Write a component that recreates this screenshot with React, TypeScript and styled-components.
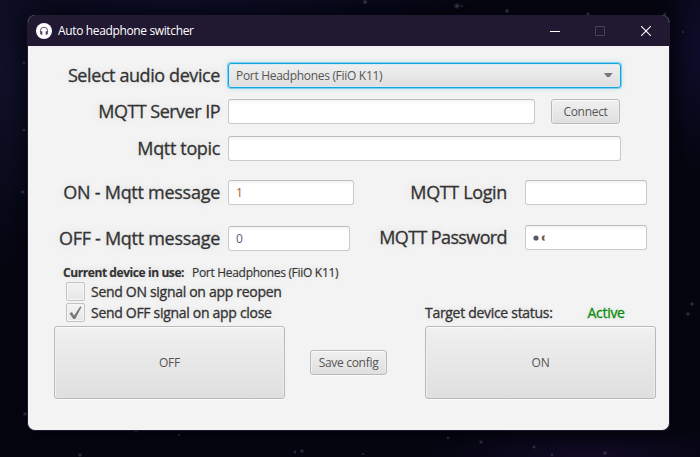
import React from "react";
import styled, { createGlobalStyle } from "styled-components";

const GlobalStyle = createGlobalStyle`
  * { box-sizing: border-box; }
  body { margin: 0; overflow: hidden; }
`;

const Desktop = styled.main`
  position: relative;
  width: 700px;
  height: 457px;
  padding: 15px 30px 0 27px;
  overflow: hidden;
  font-family: "Open Sans", "Noto Sans", sans-serif;
  background:
    radial-gradient(ellipse 170px 35px at 590px 457px, #110a25, transparent),
    radial-gradient(ellipse 40px 120px at 700px 50px, #0d0d2b, transparent),
    radial-gradient(ellipse 60px 200px at 0 70px, #10102a, transparent),
    radial-gradient(ellipse 300px 30px at 180px 0, #0c0c24, transparent),
    #04050f;
`;

const Stars = styled.svg`
  position: absolute;
  inset: 0;
`;

const Window = styled.section`
  position: relative;
  width: 643px;
  height: 416px;
  border: 1px solid #211a33;
  border-top: 0;
  border-radius: 8px;
  overflow: hidden;
  background: #f3f3f3;
  box-shadow: 0 3px 12px rgba(0, 0, 0, 0.45);
`;

const TitleBar = styled.header`
  display: flex;
  align-items: center;
  height: 31px;
  padding-left: 8px;
  background: #211932;
  color: #fff;
`;

const Title = styled.h1`
  flex: 1;
  margin: 0 0 0 6px;
  padding-top: 1px;
  font-size: 12px;
  font-weight: 400;
  letter-spacing: -0.36px;
  line-height: 30px;
`;

const Controls = styled.div`
  display: flex;
  width: 137px;
`;

const Control = styled.button`
  display: flex;
  align-items: center;
  justify-content: center;
  width: 45.5px;
  height: 30px;
  padding: 0;
  border: 0;
  background: none;
  flex: none;
`;

const Form = styled.div`
  display: flex;
  flex-direction: column;
  padding-top: 17px;
`;

const Row = styled.div<{ $gap: number }>`
  display: flex;
  align-items: flex-start;
  height: 25px;
  margin-bottom: ${(p) => p.$gap}px;
`;

const Label = styled.label<{ $width: number; $spacing: number }>`
  width: ${(p) => p.$width}px;
  flex: none;
  text-align: right;
  white-space: nowrap;
  font-size: 18px;
  line-height: 25px;
  letter-spacing: ${(p) => p.$spacing}px;
  color: #333;
  -webkit-text-stroke: 0.3px #333;
  text-shadow: 0 0 8px rgba(0, 0, 0, 0.14);
`;

const RaisedLabel = styled(Label)`
  line-height: 23px;
`;

const Field = styled.input<{ $width: number; $left?: number }>`
  width: ${(p) => p.$width}px;
  height: 25px;
  margin: 0 0 0 ${(p) => p.$left ?? 8}px;
  padding: 0 7px;
  flex: none;
  border: 1px solid #cacaca;
  border-top-color: #bdbdbd;
  border-radius: 3px;
  outline: 0;
  background: linear-gradient(#f3f3f3, #fff 4px);
  font: 12px "Open Sans", sans-serif;
  color: ${(p) => p.color ?? "#555"};
`;

const PasswordBox = styled.div`
  display: flex;
  align-items: center;
  width: 122px;
  height: 25px;
  margin: -1px 0 0 18px;
  padding-left: 7px;
  border: 1px solid #cacaca;
  border-top-color: #bdbdbd;
  border-radius: 3px;
  background: linear-gradient(#f3f3f3, #fff 4px);
`;

const Combo = styled.div`
  display: flex;
  align-items: center;
  justify-content: space-between;
  width: 393px;
  height: 25px;
  margin-left: 8px;
  padding: 0 7px;
  border: 1px solid #12a5dc;
  border-radius: 3px;
  background: linear-gradient(#f0f0f0, #dfdfdf);
  box-shadow: 0 0 0 1px #80cfeb, 0 0 6px rgba(3, 158, 211, 0.22), inset 0 0 0 1px #d9e9ef;
  font-size: 12px;
  letter-spacing: -0.3px;
  color: #555;
`;

const Button = styled.button<{ $width: number; $height: number }>`
  width: ${(p) => p.$width}px;
  height: ${(p) => p.$height}px;
  flex: none;
  padding: 0;
  border: 1px solid #b9b9b9;
  border-radius: 3px;
  background: linear-gradient(#f0f0f0, #dfdfdf);
  box-shadow: inset 0 1px 0 #fbfbfb, inset 1px 0 0 #f0f0f0, inset -1px 0 0 #ededed, 0 1px 0 #fafafa;
  font: 12px "Open Sans", sans-serif;
  letter-spacing: -0.3px;
  color: #555;
`;

const ConnectButton = styled(Button)`
  margin-left: 16px;
`;

const DeviceLine = styled.p`
  display: flex;
  margin: 0 0 0 35px;
  height: 18px;
  font-size: 12px;
  line-height: 18px;
  letter-spacing: -0.3px;
  white-space: pre;
  color: #333;
  text-shadow: 0 0 7px rgba(0, 0, 0, 0.13);
  -webkit-text-stroke: 0.15px #333;
`;

const DeviceTitle = styled.strong`
  width: 129px;
  letter-spacing: -0.42px;
`;

const CheckRow = styled.label`
  display: flex;
  align-items: center;
  height: 19px;
  margin: 0 0 2px 38px;
`;

const CheckBox = styled.span`
  display: flex;
  align-items: center;
  justify-content: center;
  width: 19px;
  height: 19px;
  border: 1px solid #c3c3c3;
  border-radius: 2px;
  background: linear-gradient(#f2f2f2, #e7e7e7);
  box-shadow: inset 0 0 0 1px #f6f6f6;
`;

const Caption = styled.span<{ $left: number; $green?: boolean }>`
  margin-left: ${(p) => p.$left}px;
  font-size: 14px;
  line-height: 19px;
  letter-spacing: -0.3px;
  white-space: nowrap;
  color: ${(p) => (p.$green ? "#078c07" : "#333")};
  -webkit-text-stroke: 0.3px currentColor;
  text-shadow: 0 0 7px rgba(0, 0, 0, 0.13);
`;

const CheckCaption = styled(Caption)`
  width: 328px;
`;

const Actions = styled.div`
  display: flex;
  align-items: center;
  height: 73px;
  margin: 2px 0 0 26px;
`;

const SaveButton = styled(Button)`
  margin: 0 38px 0 25px;
`;

const stars = [
  [24, 63, 1], [24, 130, 1], [23, 192, 1.2], [25, 414, 1.4], [80, 455, 1.2], [136, 431, 1],
  [179, 435, 0.8], [295, 452, 1], [302, 451, 1.2], [448, 438, 1], [363, 454, 0.8], [481, 442, 1.2],
  [534, 447, 1.1], [605, 453, 1.3], [692, 304, 1.3], [688, 314, 1.3], [507, 11, 1.4],
  [588, 14, 1.2], [462, 6, 0.8], [665, 14, 1], [683, 32, 0.7], [552, 455, 0.9],
  [365, 2, 1.5], [457, 6, 1.8],
];

const Glow = () => (
  <Stars width="700" height="457">
    <defs>
      <radialGradient id="star">
        <stop stopColor="#8b92a4" stopOpacity=".45" />
        <stop offset="1" stopColor="#555d78" stopOpacity="0" />
      </radialGradient>
    </defs>
    {stars.map(([x, y, r]) => (
      <circle key={`${x}-${y}`} cx={x} cy={y} r={r * 2} fill="url(#star)" />
    ))}
  </Stars>
);

const HeadphoneLogo = () => (
  <svg width="16" height="16" viewBox="0 0 16 16">
    <circle cx="8" cy="8" r="8" fill="#fff" />
    <path d="M4.4 9V7.8a3.6 3.6 0 0 1 7.2 0V9" fill="none" stroke="#4a4255" strokeWidth=".9" />
    <path d="M5.2 8.2h1.1v3.6H5.4L4.2 11V8.8zM10.8 8.2H9.7v3.6h.9l1.2-.8V8.8z" fill="#4a4255" />
  </svg>
);

export default function App() {
  return (
    <Desktop>
      <GlobalStyle />
      <Glow />
      <Window>
        <TitleBar>
          <HeadphoneLogo />
          <Title>Auto headphone switcher</Title>
          <Controls>
            <Control aria-label="Minimize">
              <svg width="10" height="10"><path d="M0 5.5h10" stroke="#fff" /></svg>
            </Control>
            <Control aria-label="Maximize">
              <svg width="10" height="10"><rect x=".5" y=".5" width="9" height="9" rx=".5" fill="none" stroke="#4b435a" /></svg>
            </Control>
            <Control aria-label="Close">
              <svg width="10" height="10"><path d="M0 0l10 10M10 0L0 10" stroke="#fff" strokeWidth="1.1" /></svg>
            </Control>
          </Controls>
        </TitleBar>
        <Form>
          <Row $gap={11}>
            <Label $width={192} $spacing={-0.407}>Select audio device</Label>
            <Combo>
              Port Headphones (FiiO K11)
              <svg width="9" height="5"><path d="M0 0h8.6L5.5 4H3.1z" fill="#777" /></svg>
            </Combo>
          </Row>
          <Row $gap={12}>
            <Label $width={192} $spacing={-0.52}>MQTT Server IP</Label>
            <Field $width={307} readOnly />
            <ConnectButton $width={69} $height={25}>Connect</ConnectButton>
          </Row>
          <Row $gap={19}>
            <Label $width={192} $spacing={-0.35}>Mqtt topic</Label>
            <Field $width={393} readOnly />
          </Row>
          <Row $gap={21}>
            <Label $width={192} $spacing={-0.27}>ON - Mqtt message</Label>
            <Field $width={126} value="1" color="#9a6633" readOnly />
            <Label $width={153} $spacing={-0.36}>MQTT Login</Label>
            <Field $width={122} $left={18} readOnly />
          </Row>
          <Row $gap={13}>
            <Label $width={192} $spacing={-0.29}>OFF - Mqtt message</Label>
            <Field $width={122} value="0" color="#555b85" readOnly />
            <RaisedLabel $width={157} $spacing={-0.62}>MQTT Password</RaisedLabel>
            <PasswordBox>
              <svg width="14" height="6"><circle cx="3" cy="3" r="2.6" fill="#5b5b60" /><path d="M11.5 .4a2.6 2.6 0 0 0 0 5.2q-1.2-2.6 0-5.2" fill="#75614d" stroke="#75614d" strokeWidth=".5" /></svg>
            </PasswordBox>
          </Row>
          <DeviceLine>
            <DeviceTitle>Current device in use:</DeviceTitle>
            Port Headphones (FiiO K11)
          </DeviceLine>
          <CheckRow>
            <CheckBox />
            <CheckCaption $left={6}>Send ON signal on app reopen</CheckCaption>
          </CheckRow>
          <CheckRow>
            <CheckBox>
              <svg width="13" height="14"><path d="M.5 7.5L3 6l2 3.7L11.2.4l1.3.5-6.3 12H4.4z" fill="#777" /></svg>
            </CheckBox>
            <CheckCaption $left={6}>Send OFF signal on app close</CheckCaption>
            <Caption $left={6}>Target device status:</Caption>
            <Caption $left={35} $green>Active</Caption>
          </CheckRow>
          <Actions>
            <Button $width={231} $height={73}>OFF</Button>
            <SaveButton $width={77} $height={25}>Save config</SaveButton>
            <Button $width={231} $height={73}>ON</Button>
          </Actions>
        </Form>
      </Window>
    </Desktop>
  );
}
